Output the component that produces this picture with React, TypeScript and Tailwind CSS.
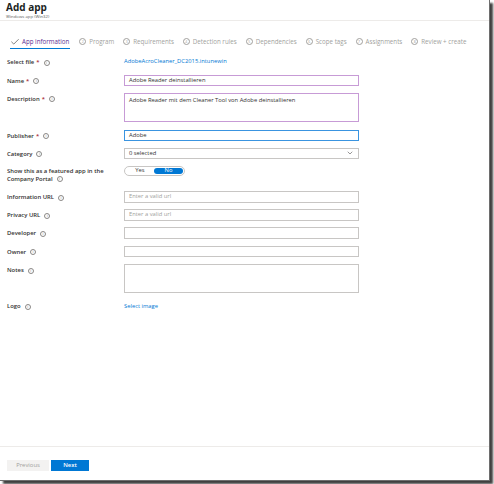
import { Check, ChevronDown } from 'lucide-react'

const font = { fontFamily: '"Open Sans", "Noto Sans", sans-serif' }

function Info() {
  return (
    <span className="ml-[4px] inline-flex h-[6px] w-[6px] items-center justify-center rounded-full border-[0.6px] border-[#8a8886] text-[4px] font-normal leading-none text-[#8a8886]">
      i
    </span>
  )
}

function Label({ text, required, info = true }: { text: string; required?: boolean; info?: boolean }) {
  return (
    <div className="flex w-[117px] shrink-0 items-center self-start pt-[2px] text-[5.9px] font-semibold leading-[9px] text-[#323130]">
      {text}
      {required && <span className="ml-[2px] text-[#a4262c]">*</span>}
      {info && <Info />}
    </div>
  )
}

function Input({ value, placeholder, tone = 'gray', tall }: { value?: string; placeholder?: string; tone?: 'gray' | 'purple' | 'blue'; tall?: boolean }) {
  const border =
    tone === 'purple' ? 'border-[#c79bd6]' : tone === 'blue' ? 'border-[#3a94e0]' : 'border-[#c8c6c4]'
  return (
    <div
      className={`w-[235px] border ${border} bg-white px-[4px] text-[5.8px] ${tall ? 'h-[29px] pt-[2px] leading-[9px]' : 'h-[11.5px] leading-[9.5px]'} ${value ? 'text-[#323130]' : 'text-[#a19f9d]'}`}
    >
      {value ?? placeholder}
    </div>
  )
}

const steps = ['Program', 'Requirements', 'Detection rules', 'Dependencies', 'Scope tags', 'Assignments', 'Review + create']

export default function App() {
  return (
    <div className="h-[484px] w-[494px] bg-white" style={font}>
      <div className="flex h-[481px] w-[490px] flex-col border-b border-r border-[#6e6e6e] bg-white shadow-[3px_3px_2px_rgba(0,0,0,0.75)]">
        <div className="h-[21px] border-b border-[#edebe9] px-[6px]">
          <div className="text-[10px] font-bold leading-[14px] text-[#201f1e]">Add app</div>
          <div className="text-[4.3px] leading-[5px] text-[#605e5c]">Windows app (Win32)</div>
        </div>

        <div className="mt-[15px] flex h-[13px] items-start pl-[10px] text-[6.2px] text-[#a19f9d]">
          <div className="flex h-[13px] items-center border-b-[1.5px] border-[#0078d4] pb-[1px] pr-[1px]">
            <Check className="mr-[2px] h-[10px] w-[10px] text-[#323130]" strokeWidth={1.5} />
            <span className="text-[#5c2e91]">App information</span>
          </div>
          {steps.map((s, i) => (
            <div key={s} className="ml-[9px] flex h-[11px] items-center">
              <span className="mr-[3px] inline-flex h-[7px] w-[7px] items-center justify-center rounded-full border-[0.6px] border-[#a19f9d] text-[3.5px] leading-none">
                {i + 2}
              </span>
              {s}
            </div>
          ))}
        </div>

        <div className="flex flex-col pl-[7px]">
          <div className="mt-[7px] flex h-[10px]">
            <Label text="Select file" required />
            <span className="pt-[1px] text-[5.8px] leading-[9px] text-[#0078d4]">AdobeAcroCleaner_DC2015.intunewin</span>
          </div>

          <div className="mt-[8.5px] flex">
            <Label text="Name" required />
            <Input value="Adobe Reader deinstallieren" tone="purple" />
          </div>

          <div className="mt-[6.5px] flex">
            <Label text="Description" required />
            <Input value="Adobe Reader mit dem Cleaner Tool von Adobe deinstallieren" tone="purple" tall />
          </div>

          <div className="mt-[8px] flex">
            <Label text="Publisher" required />
            <Input value="Adobe" tone="blue" />
          </div>

          <div className="mt-[6.5px] flex">
            <Label text="Category" />
            <div className="flex h-[11.5px] w-[235px] items-center justify-between border border-[#c8c6c4] px-[4px] text-[5.8px] text-[#323130]">
              0 selected
              <ChevronDown className="h-[8px] w-[8px] text-[#323130]" strokeWidth={1.5} />
            </div>
          </div>

          <div className="mt-[6.5px] flex h-[19px]">
            <div className="w-[117px] shrink-0 pt-[1px] text-[5.9px] font-semibold leading-[8px] text-[#323130]">
              Show this as a featured app in the
              <br />
              <span className="inline-flex items-center">
                Company Portal
                <Info />
              </span>
            </div>
            <div className="flex h-[10.5px] w-[61px] items-center rounded-full border border-[#c8c6c4] p-[1px] text-[5.8px]">
              <span className="flex-1 text-center text-[#323130]">Yes</span>
              <span className="flex h-full w-[29px] items-center justify-center rounded-full bg-[#0078d4] text-white">No</span>
            </div>
          </div>

          <div className="mt-[6.5px] flex">
            <Label text="Information URL" />
            <Input placeholder="Enter a valid url" />
          </div>

          <div className="mt-[6.5px] flex">
            <Label text="Privacy URL" />
            <Input placeholder="Enter a valid url" />
          </div>

          <div className="mt-[6.5px] flex">
            <Label text="Developer" />
            <Input />
          </div>

          <div className="mt-[7px] flex">
            <Label text="Owner" />
            <Input />
          </div>

          <div className="mt-[7px] flex">
            <Label text="Notes" />
            <Input tall />
          </div>

          <div className="mt-[7px] flex">
            <Label text="Logo" />
            <span className="pt-[2px] text-[5.8px] leading-[9px] text-[#0078d4]">Select image</span>
          </div>
        </div>

        <div className="flex-1" />

        <div className="h-[34px] border-t border-[#edebe9] px-[7px] pt-[13px]">
          <div className="flex gap-[2px] text-[5.9px]">
            <div className="flex h-[11px] w-[42px] items-center justify-center bg-[#f3f2f1] text-[#a19f9d]">Previous</div>
            <div className="flex h-[11px] w-[38px] items-center justify-center bg-[#0078d4] font-semibold text-white">Next</div>
          </div>
        </div>
      </div>
    </div>
  )
}
